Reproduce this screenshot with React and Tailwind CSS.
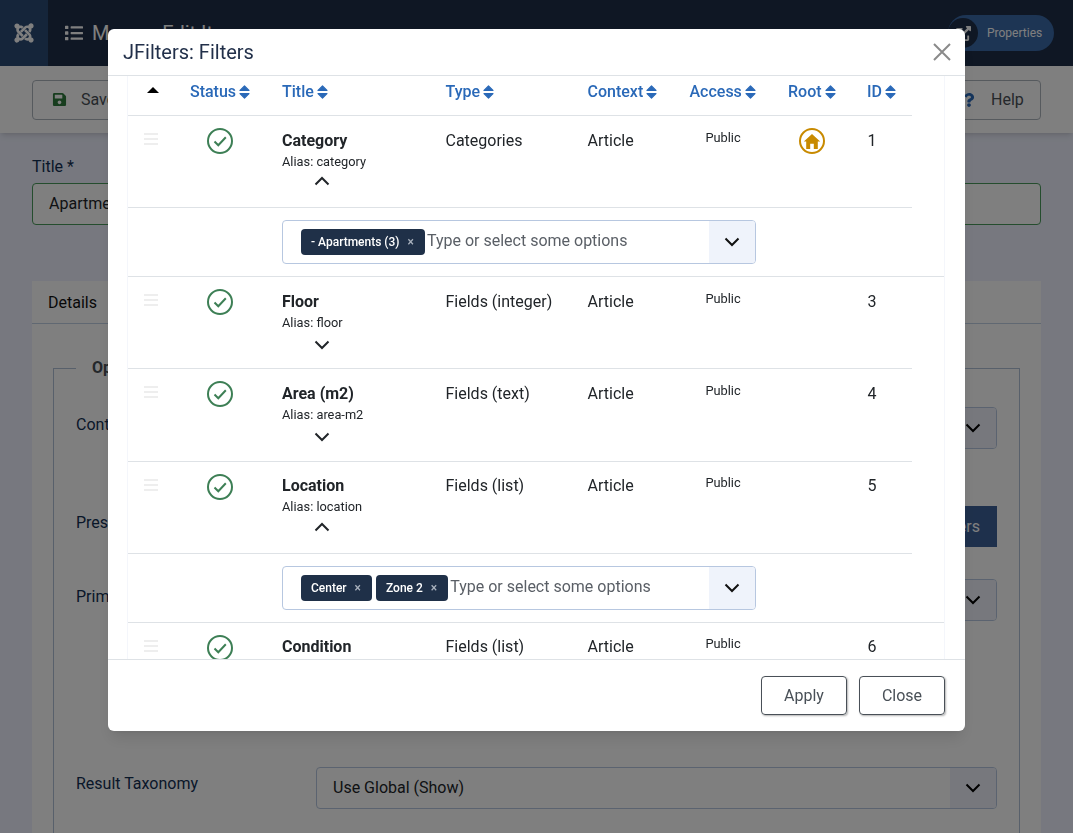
import React from "react";
import { FaJoomla, FaList, FaSave, FaQuestion, FaExternalLinkAlt } from "react-icons/fa";

const GRID = "grid grid-cols-[46px_92px_163px_142px_102px_99px_79px_61px] w-[784px]";

const filters = [
  { title: "Category", alias: "category", type: "Categories", id: 1, root: true, tags: ["- Apartments (3)"], h: "h-[92px]", pt: "pt-[13px]", chev: "mt-[5px]" },
  { title: "Floor", alias: "floor", type: "Fields (integer)", id: 3, h: "h-[92px]", pt: "pt-[13px]", chev: "mt-[8px]" },
  { title: "Area (m2)", alias: "area-m2", type: "Fields (text)", id: 4, h: "h-[93px]", pt: "pt-[13px]", chev: "mt-[8px]" },
  { title: "Location", alias: "location", type: "Fields (list)", id: 5, tags: ["Center", "Zone 2"], h: "h-[92px]", pt: "pt-3", chev: "mt-[6px]" },
  { title: "Condition", alias: "condition", type: "Fields (list)", id: 6, h: "h-[92px]", pt: "pt-3", chev: "mt-[8px]" },
];

function Chevron({ up, className }) {
  return (
    <svg viewBox="0 0 16 10" className={className} fill="none" stroke="currentColor" strokeWidth="2">
      <path d={up ? "M1.5 8.5 8 2l6.5 6.5" : "M1.5 1.5 8 8l6.5-6.5"} />
    </svg>
  );
}

function StatusIcon() {
  return (
    <svg viewBox="0 0 26 26" className="w-[26px] h-[26px]" fill="none" stroke="#3d7f55">
      <circle cx="13" cy="13" r="12" strokeWidth="2" />
      <path d="M7.5 13.5l3.8 3.8 7.5-8" strokeWidth="2" />
    </svg>
  );
}

function SortIcon() {
  return (
    <svg viewBox="0 0 11 14" className="w-[11px] h-[14px]" fill="currentColor" stroke="currentColor" strokeWidth="1.2" strokeLinejoin="round">
      <path d="M1 5.4 5.5 .9 10 5.4ZM1 8.6 5.5 13.1 10 8.6Z" />
    </svg>
  );
}

function HeadCell({ label, className = "" }) {
  return (
    <div className={`flex items-center gap-[3px] h-full pb-[8px] font-medium text-[#2a69b8] ${className}`}>
      {label}
      <SortIcon />
    </div>
  );
}

function FilterRow({ f }) {
  return (
    <>
      <div className={`${GRID} ${f.h} border-b border-[#dee2e6]`}>
        <div className="flex justify-center pt-[17px]">
          <div className="w-[14px] h-[12px] flex flex-col justify-between">
            <div className="h-[2px] bg-[#eeeeee]" />
            <div className="h-[2px] bg-[#eeeeee]" />
            <div className="h-[2px] bg-[#eeeeee]" />
          </div>
        </div>
        <div className="flex justify-center pt-3">
          <StatusIcon />
        </div>
        <div className={`pl-4 ${f.pt}`}>
          <div className="font-bold leading-6 text-[#212529]">{f.title}</div>
          <div className="-mt-px text-[12.8px] leading-[19px] text-[#212529]">Alias: {f.alias}</div>
          <div className={`w-[80px] flex justify-center text-[#212529] ${f.chev}`}>
            <Chevron up={!!f.tags} className="w-[16px] h-[10px]" />
          </div>
        </div>
        <div className={`pl-[16.5px] leading-6 text-[#212529] ${f.pt}`}>{f.type}</div>
        <div className={`pl-[16.5px] leading-6 text-[#212529] ${f.pt}`}>Article</div>
        <div className={`pl-px text-center text-[12.8px] leading-[18px] text-[#212529] ${f.pt}`}>Public</div>
        <div className="flex justify-center pt-3">
          {f.root && (
            <div className="w-[26px] h-[26px] rounded-full border-2 border-[#c88a00] flex items-center justify-center">
              <svg viewBox="0 0 18 17" className="w-[18px] h-[17px]" fill="#c88a00">
                <path d="M9 1 .8 8.6H3.2V16H7.2V10.8H10.8V16H14.8V8.6H17.2Z" />
              </svg>
            </div>
          )}
        </div>
        <div className={`pl-[16.5px] leading-6 text-[#212529] ${f.pt}`}>{f.id}</div>
      </div>
      {f.tags && (
        <div className="h-[69px] border-b border-[#dee2e6] pt-3 pl-[154px]">
          <div className="w-[474px] h-[44px] flex border border-[#b7c7e0] rounded overflow-hidden">
            <div className="flex-1 flex items-start pl-[18px] pt-2 gap-1">
              {f.tags.map((t) => (
                <span key={t} className="h-[26px] flex items-center bg-[#1f3048] text-white text-[12px] font-medium rounded pl-[10px] pr-[11px]">
                  {t}
                  <span className="ml-[8px] text-[#a9b1bd] text-[12px]">×</span>
                </span>
              ))}
              <span className="-ml-[2px] leading-6 text-[#5a5f66]">Type or select some options</span>
            </div>
            <div className="w-[46px] bg-[#eff3fb] flex items-center justify-center text-[#111]">
              <Chevron className="w-[16px] h-[10px]" />
            </div>
          </div>
        </div>
      )}
    </>
  );
}

function Field({ label, pad, labelPad = "pt-1.5", children }) {
  return (
    <div className={`flex ${pad}`}>
      <div className={`w-[240px] text-[#132f53] leading-6 ${labelPad}`}>{label}</div>
      <div className="w-[681px]">{children}</div>
    </div>
  );
}

function SelectBox({ text }) {
  return (
    <div className="h-[42px] flex border border-[#b7c7e0] rounded overflow-hidden bg-white">
      <div className="flex-1 pl-4 flex items-center text-[#212529]">{text}</div>
      <div className="w-[46px] bg-[#eef1fb] flex items-center justify-center text-black">
        <Chevron className="w-[16px] h-[10px]" />
      </div>
    </div>
  );
}

export default function App() {
  return (
    <div className="h-[833px] overflow-hidden bg-[#eef1fe] [font-family:Roboto,sans-serif] text-base">
      <div className="h-[66px] bg-[#1e2e48] flex items-center">
        <div className="w-[48px] h-full bg-[#2a4a74] flex items-center justify-center text-white">
          <FaJoomla className="text-[22px]" />
        </div>
        <FaList className="ml-[17px] text-white text-[18px]" />
        <div className="ml-[9px] text-white text-[20px]">Menus: Edit Item</div>
        <div className="ml-auto mr-[19px] h-[36px] w-[106px] rounded-full bg-[#3a6aa8] flex items-center">
          <div className="w-[30px] h-[30px] ml-0 rounded-full bg-[#1e2e48] flex items-center justify-center text-white">
            <FaExternalLinkAlt className="text-[15px]" />
          </div>
          <span className="ml-[9px] text-[12px] text-white">Properties</span>
        </div>
      </div>

      <div className="h-[67px] bg-white shadow-md px-8 flex items-center justify-between">
        <div className="h-[40px] w-[140px] border border-[#adb5bd] rounded flex items-center pl-[19px] text-[#495057]">
          <FaSave className="text-[15px] text-[#2f7a3d]" />
          <span className="ml-[14px]">Save</span>
        </div>
        <div className="h-[40px] w-[90px] border border-[#adb5bd] rounded flex items-center pl-[10px] text-[#495057]">
          <FaQuestion className="text-[14px] text-[#2a69b8]" />
          <span className="ml-[15px]">Help</span>
        </div>
      </div>

      <div className="px-8 pt-[22px]">
        <div className="text-[#132f53] leading-6">Title *</div>
        <div className="h-[42px] mt-[4px] border border-[#4a9a5c] rounded bg-white flex items-center pl-4 text-[#212529]">Apartments</div>

        <div className="mt-[56px] bg-white">
          <div className="h-[43px] border-b border-[#c0d0e4] pl-4 pt-px flex items-center text-[#111]">Details</div>
          <div className="px-[21px] pt-[41px]">
            <fieldset className="border border-[#b0c0d6] h-[600px] px-[22px] mt-[-9px]">
              <legend className="px-4 font-bold text-[#495057] leading-6">Options</legend>
              <Field label="Contexts" pad="pt-[27px]">
                <SelectBox text="Article" />
              </Field>
              <Field label="Preset" pad="pt-[57px]" labelPad="pt-[5px]">
                <div className="flex justify-end">
                  <div className="h-[41px] w-[150px] bg-[#3d6199] flex items-center justify-end pr-[17px] text-white">Edit Filters</div>
                </div>
              </Field>
              <Field label="Primary" pad="pt-[32px]">
                <SelectBox text="Use Global" />
              </Field>
              <Field label="Result Taxonomy" pad="pt-[146px]" labelPad="pt-[5px]">
                <SelectBox text="Use Global (Show)" />
              </Field>
            </fieldset>
          </div>
        </div>
      </div>

      <div className="fixed inset-0 bg-black/50">
        <div className="mx-auto mt-[29px] w-[857px] h-[702px] bg-white rounded-md shadow-lg flex flex-col overflow-hidden">
          <div className="h-[47px] shrink-0 border-b border-[#dee2e6] flex items-center justify-between pl-[15px] pr-[14px]">
            <div className="text-[20px] text-[#22304a]">JFilters: Filters</div>
            <svg viewBox="0 0 18 18" className="w-[18px] h-[18px]" fill="none" stroke="#8a8a8a" strokeWidth="2">
              <path d="M1 1l16 16M17 1L1 17" />
            </svg>
          </div>

          <div className="flex-1 overflow-hidden px-5">
            <div className="-ml-px w-[818px] h-full border-x border-[#f4f6fb]">
              <div className={`${GRID} h-[40px] border-b border-[#dee2e6]`}>
                <div className="flex justify-center pt-[11px] pl-[4px]">
                  <svg viewBox="0 0 12 6" className="w-[12px] h-[6px]" fill="black">
                    <path d="M6 0 12 6H0Z" />
                  </svg>
                </div>
                <HeadCell label="Status" className="justify-center" />
                <HeadCell label="Title" className="pl-4" />
                <HeadCell label="Type" className="pl-[16.5px]" />
                <HeadCell label="Context" className="pl-[16.5px]" />
                <HeadCell label="Access" className="pl-[16.5px]" />
                <HeadCell label="Root" className="pl-4" />
                <HeadCell label="ID" className="pl-4" />
              </div>
              {filters.map((f) => (
                <FilterRow key={f.id} f={f} />
              ))}
            </div>
          </div>

          <div className="h-[72px] shrink-0 border-t border-[#dee2e6] flex items-start justify-end gap-3 pt-4 pr-5">
            <div className="w-[86px] h-[39px] border border-[#495057] rounded flex items-center justify-center text-[#495057] shadow-[1px_1px_2px_rgba(0,0,0,0.3)]">Apply</div>
            <div className="w-[86px] h-[39px] border border-[#495057] rounded flex items-center justify-center text-[#495057] shadow-[1px_1px_2px_rgba(0,0,0,0.3)]">Close</div>
          </div>
        </div>
      </div>
    </div>
  );
}
